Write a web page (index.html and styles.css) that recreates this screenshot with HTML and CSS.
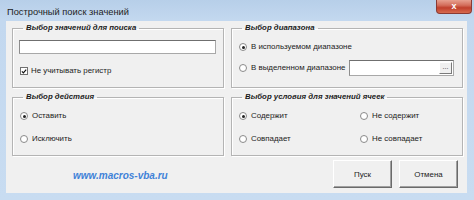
FILE: index.html
```html
<!DOCTYPE html>
<html lang="ru">
<head>
<meta charset="utf-8">
<title>Построчный поиск значений</title>
<link rel="stylesheet" href="styles.css">
</head>
<body>
<div class="window">
  <div class="titlebar">
    <span class="title">Построчный поиск значений</span>
    <span class="close">x</span>
  </div>
  <div class="client">
    <div class="grid">
      <fieldset class="frame">
        <legend>Выбор значений для поиска</legend>
        <div class="textbox wide"></div>
        <label class="opt chk-row"><span class="check"><svg viewBox="0 0 8 8" width="7" height="7"><path d="M1.2 3.8 L3.2 5.9 L6.9 1.6" fill="none" stroke="#111" stroke-width="1.6"/></svg></span>Не учитывать регистр</label>
      </fieldset>
      <fieldset class="frame">
        <legend>Выбор диапазона</legend>
        <label class="opt r1"><span class="radio on"></span>В используемом диапазоне</label>
        <div class="range-row">
          <label class="opt"><span class="radio"></span>В выделенном диапазоне</label>
          <div class="textbox range"><span class="dots">...</span></div>
        </div>
      </fieldset>
      <fieldset class="frame">
        <legend>Выбор действия</legend>
        <label class="opt r1"><span class="radio on"></span>Оставить</label>
        <label class="opt r2"><span class="radio"></span>Исключить</label>
      </fieldset>
      <fieldset class="frame">
        <legend>Выбор условия для значений ячеек</legend>
        <div class="cond">
          <label class="opt"><span class="radio on"></span>Содержит</label>
          <label class="opt"><span class="radio"></span>Не содержит</label>
          <label class="opt"><span class="radio"></span>Совпадает</label>
          <label class="opt"><span class="radio"></span>Не совпадает</label>
        </div>
      </fieldset>
    </div>
    <div class="bottom">
      <span class="link">www.macros-vba.ru</span>
      <div class="buttons">
        <span class="btn">Пуск</span>
        <span class="btn">Отмена</span>
      </div>
    </div>
  </div>
</div>
</body>
</html>
```
FILE: styles.css
```css
* { box-sizing: border-box; }
html, body { margin: 0; padding: 0; }
body {
  width: 474px;
  height: 200px;
  overflow: hidden;
  font-family: "Liberation Sans", Arial, sans-serif;
}
.window {
  width: 474px;
  height: 200px;
  background: linear-gradient(180deg, #b7cfe9 0px, #c3d8ef 20px, #c8dcf1 100%);
}
.titlebar {
  height: 21px;
  display: flex;
  align-items: flex-start;
  padding-left: 7px;
}
.title {
  font-family: "Liberation Sans", Arial, sans-serif;
  font-size: 9.3px;
  line-height: 12px;
  margin-top: 6px;
  color: #1e1e1e;
}
.close {
  margin-left: auto;
  margin-right: 2px;
  width: 36px;
  height: 14px;
  border: 1px solid #8a3a33;
  border-top: none;
  border-radius: 0 0 4px 4px;
  background: linear-gradient(180deg, #e7a08f 0%, #d46f5c 40%, #c0402c 60%, #d76a4f 100%);
  color: #fff;
  font-size: 9px;
  font-weight: bold;
  line-height: 12px;
  text-align: center;
}
.client {
  margin-left: 6px;
  width: 461px;
  height: 172px;
  background: #f0f0f0;
  padding: 2px 0 0 6px;
  font-size: 7.9px;
  color: #222;
}
.grid {
  display: grid;
  grid-template-columns: 212px 232px;
  grid-template-rows: 65px 64px;
  column-gap: 7px;
  row-gap: 4px;
}
.frame {
  margin: 0;
  padding: 0 0 0 6px;
  border: 1px solid #b4b4b4;
  box-shadow: 1px 1px 0 #fff, inset 1px 1px 0 #fff;
  min-width: 0;
}
.frame legend {
  font-weight: bold;
  font-style: italic;
  font-size: 7.8px;
  line-height: 10px;
  padding: 0 3px;
  margin-left: 4px;
  color: #1a1a1a;
}
.textbox {
  background: #fff;
  border: 1px solid #a8a8a8;
  border-top-color: #6f6f6f;
  border-left-color: #8d8d8d;
}
.textbox.wide {
  width: 197px;
  height: 14px;
  margin-top: 7px;
}
.opt {
  display: flex;
  align-items: center;
  gap: 4px;
  height: 10px;
  line-height: 10px;
  white-space: nowrap;
}
.chk-row { margin-top: 12px; margin-left: 1px; gap: 3px; }
.check {
  width: 8px;
  height: 8px;
  border: 1px solid #707070;
  background: #fff;
  display: flex;
  align-items: center;
  justify-content: center;
}
.check svg { display: block; }
.radio {
  width: 8px;
  height: 8px;
  border-radius: 50%;
  border: 1px solid #8a8a8a;
  background: #fff;
  flex: none;
  display: flex;
  align-items: center;
  justify-content: center;
}
.radio.on::after {
  content: "";
  width: 3px;
  height: 3px;
  border-radius: 50%;
  background: #222;
}
.r1 { margin-top: 9px; margin-left: 1px; }
.r2 { margin-top: 13px; margin-left: 1px; }
.range-row {
  display: flex;
  align-items: center;
  margin-top: 8px;
  margin-left: 1px;
}
.textbox.range {
  margin-left: auto;
  margin-right: 8px;
  width: 105px;
  height: 16px;
  display: flex;
  justify-content: flex-end;
  align-items: center;
  padding-right: 1px;
}
.dots {
  width: 13px;
  height: 12px;
  border: 1px solid;
  border-color: #fff #7a7a7a #7a7a7a #fff;
  background: #f0f0f0;
  font-size: 7px;
  line-height: 8px;
  text-align: center;
  color: #333;
}
.cond {
  display: grid;
  grid-template-columns: 121px auto;
  row-gap: 13px;
  margin-top: 9px;
  margin-left: 1px;
}
.bottom {
  display: flex;
  align-items: center;
  margin-top: 4px;
}
.link {
  margin-left: 61px;
  font-weight: bold;
  font-style: italic;
  font-size: 10px;
  color: #3f82d8;
  margin-top: 2px;
}
.buttons {
  margin-left: auto;
  margin-right: 9px;
  display: flex;
  gap: 7px;
}
.btn {
  width: 59px;
  height: 28px;
  display: flex;
  align-items: center;
  justify-content: center;
  background: #f0f0f0;
  border: 1px solid;
  border-color: #fff #6a6a6a #6a6a6a #fff;
  box-shadow: inset -1px -1px 0 #a0a0a0;
  font-size: 7.9px;
  color: #222;
}
```
